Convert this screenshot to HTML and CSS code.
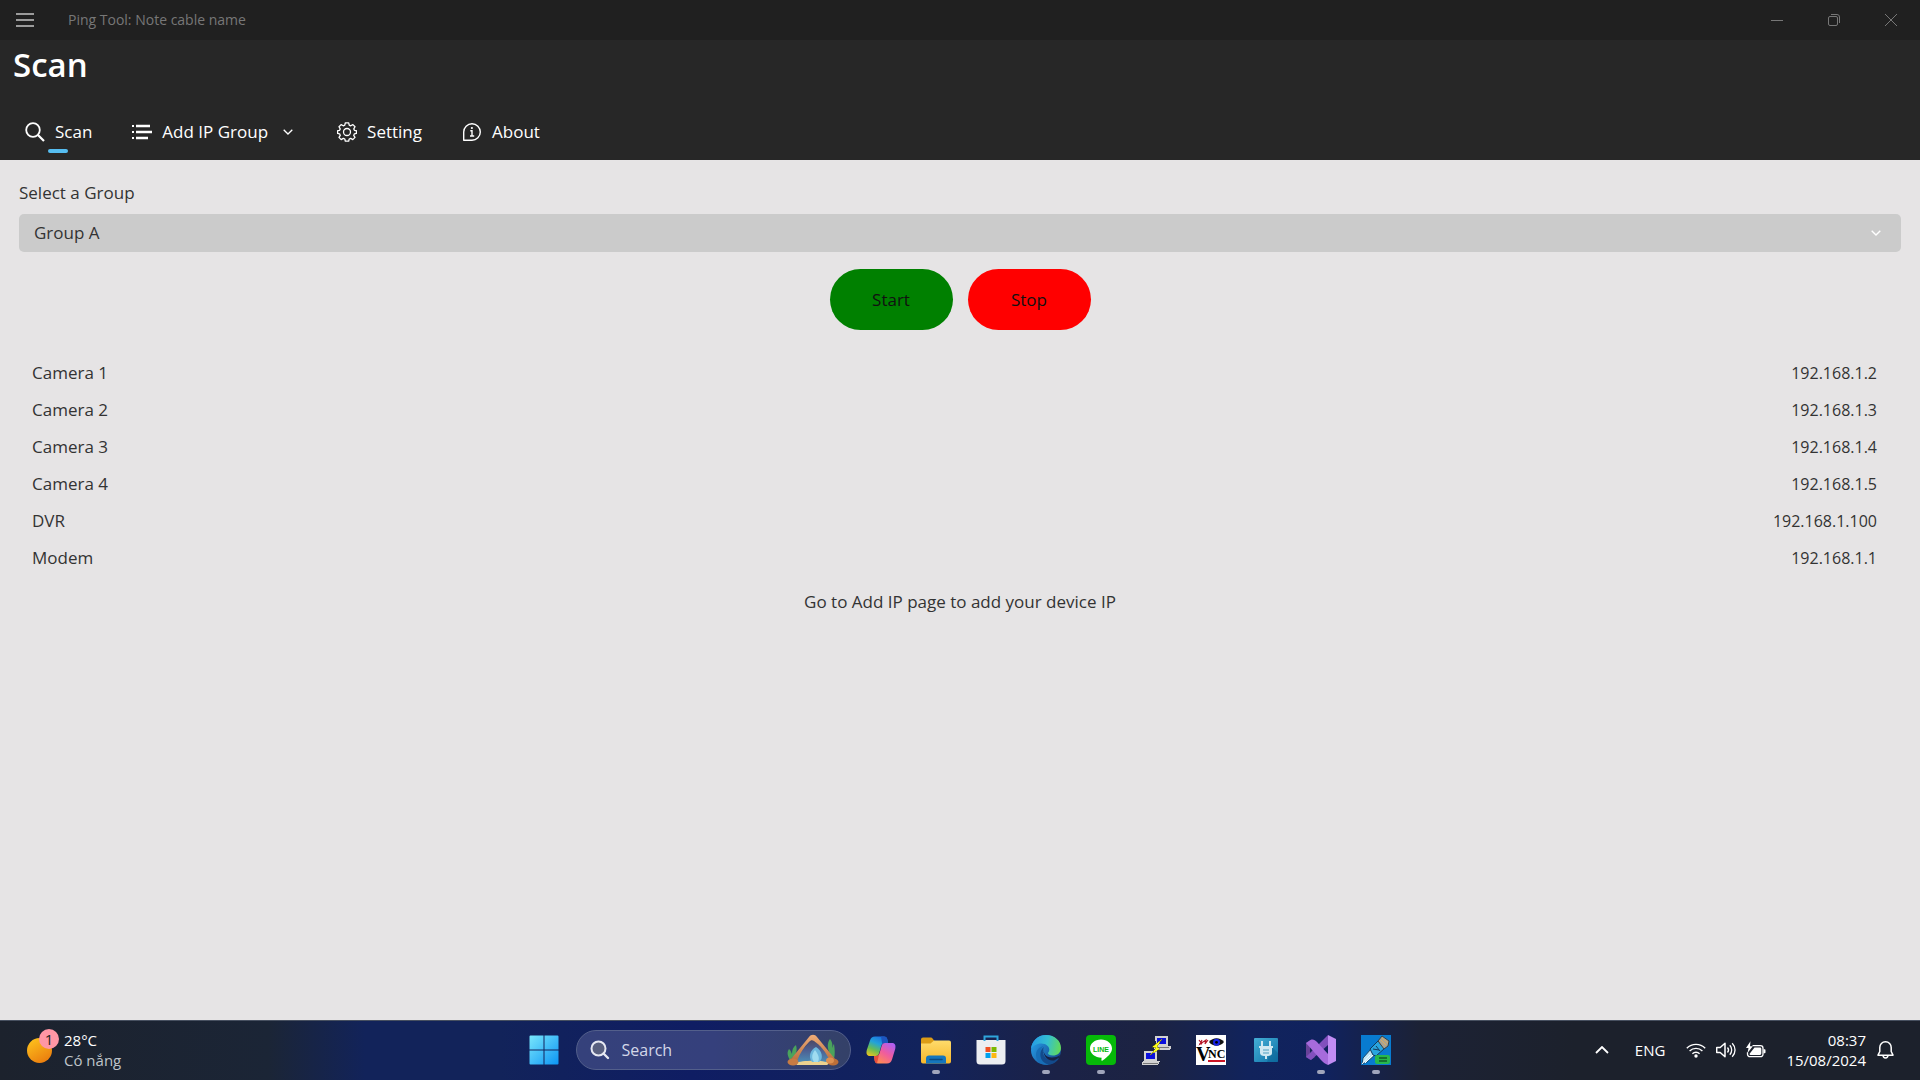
FILE: index.html
```html
<!DOCTYPE html>
<html lang="en">
  <head>
    <meta charset="UTF-8" />
    <meta name="viewport" content="width=device-width, initial-scale=1.0" />
    <title>Ping Tool: Note cable name</title>
    <link rel="stylesheet" href="styles.css">
  </head>
  <body>
    <!-- Window title bar -->
    <header class="title-bar">
      <button type="button" class="menu-button" aria-label="Menu">
        <svg width="20" height="14" viewBox="0 0 20 14"><path d="M1 1h18M1 7h18M1 13h18" stroke="#c4c4c4" stroke-width="1.4"/></svg>
      </button>
      <span class="window-title">Ping Tool: Note cable name</span>
      <div class="window-buttons">
        <button type="button" aria-label="Minimize">
          <svg width="14" height="14" viewBox="0 0 14 14"><path d="M1 7.5h12"/></svg>
        </button>
        <button type="button" aria-label="Restore">
          <svg width="14" height="14" viewBox="0 0 14 14"><rect x="1.5" y="3.5" width="9" height="9" rx="1.5"/><path d="M4 1.5h6a2.5 2.5 0 0 1 2.5 2.5v6"/></svg>
        </button>
        <button type="button" aria-label="Close">
          <svg width="14" height="14" viewBox="0 0 14 14"><path d="M1 1l12 12M13 1L1 13"/></svg>
        </button>
      </div>
    </header>

    <!-- Page heading and navigation -->
    <div class="page-header">
      <h1>Scan</h1>
      <nav class="tabs">
        <a href="#scan" class="tab active">
          <svg width="20" height="20" viewBox="0 0 20 20"><circle cx="8" cy="8" r="6.8" stroke-width="1.8"/><path d="M13 13l6 6" stroke-width="2.2"/></svg>
          <span>Scan</span>
        </a>
        <a href="#groups" class="tab">
          <svg width="20" height="20" viewBox="0 0 20 20"><path d="M4 4h14M4 10h16M4 16h12" stroke-width="2.4"/><path d="M0 4h2M0 10h2M0 16h2" stroke-width="2"/></svg>
          <span>Add IP Group</span>
          <svg class="tab-arrow" width="10" height="6" viewBox="0 0 10 6"><path d="M.7.7L5 5L9.300 .7" stroke-width="1.3"/></svg>
        </a>
        <a href="#setting" class="tab">
          <svg width="20" height="20" viewBox="0 0 20 20"><path d="M8.300 .8h3.400l.5 2.300 1.500.7 2.200-1.200 2.100 2.200-1.200 2.100.6 1.400 2 .4v2.700l-2 .4-.7 1.600 1.300 2-2.200 2.200-2.100-1.200-1.500.6-.5 2.200H8.300l-.5-2.200-1.500-.6-2.100 1.200L2 15.400l1.300-2-.7-1.600-2-.4V8.700l2-.4.6-1.400L2 4.800l2.100-2.200 2.200 1.200 1.500-.7z" stroke-width="1.3" stroke-linejoin="round"/><circle cx="10" cy="10" r="3.500" stroke-width="1.3"/></svg>
          <span>Setting</span>
        </a>
        <a href="#about" class="tab">
          <svg width="20" height="20" viewBox="0 0 20 20"><path d="M1.700 18.300V10a8.300 8.300 0 1 1 8.300 8.300z" stroke-width="1.400" stroke-linejoin="round"/><path d="M8.300 8.700H10v5M8 14h4.200" stroke-width="1.400"/><circle cx="9.900" cy="6" r=".5" stroke-width="1.200"/></svg>
          <span>About</span>
        </a>
      </nav>
    </div>

    <main class="content">
      <label for="group">Select a Group</label>
      <div class="select-box">
        <select id="group">
          <option>Group A</option>
        </select>
        <svg class="select-arrow" width="10" height="6" viewBox="0 0 10 6"><path d="M.7.7L5 5L9.300 .7"/></svg>
      </div>

      <div class="actions">
        <button type="button" class="start">Start</button>
        <button type="button" class="stop">Stop</button>
      </div>

      <table class="devices">
        <tbody>
          <tr><td>Camera 1</td><td>192.168.1.2</td></tr>
          <tr><td>Camera 2</td><td>192.168.1.3</td></tr>
          <tr><td>Camera 3</td><td>192.168.1.4</td></tr>
          <tr><td>Camera 4</td><td>192.168.1.5</td></tr>
          <tr><td>DVR</td><td>192.168.1.100</td></tr>
          <tr><td>Modem</td><td>192.168.1.1</td></tr>
        </tbody>
      </table>

      <p class="hint">Go to Add IP page to add your device IP</p>
    </main>

    <!-- Taskbar -->
    <footer class="taskbar">
      <button type="button" class="weather">
        <span class="sun"><span class="badge">1</span></span>
        <span class="weather-text">
          <span>28°C</span>
          <span class="muted">Có nắng</span>
        </span>
      </button>

      <div class="apps">
        <button type="button" class="app" aria-label="Start menu">
          <svg width="30" height="30" viewBox="0 0 30 30">
            <defs><linearGradient id="win" x1="0" y1="0" x2="30" y2="30" gradientUnits="userSpaceOnUse"><stop stop-color="#7be8fb"/><stop offset="1" stop-color="#0a93f5"/></linearGradient></defs>
            <path fill="url(#win)" d="M1.500 .5H14.500v14H.5v-13a1 1 0 0 1 1-1zM15.500 .5h13a1 1 0 0 1 1 1v13h-14zM.5 15.500H14.500v14H1.500a1 1 0 0 1-1-1zM15.500 15.500h14v13a1 1 0 0 1-1 1h-13z"/>
          </svg>
        </button>

        <label class="search">
          <svg width="20" height="20" viewBox="0 0 20 20"><circle cx="8.500" cy="8.500" r="7" fill="#596080" stroke="#e6e8f2" stroke-width="2"/><path d="M13.500 13.500l4.500 4.500" stroke="#e6e8f2" stroke-width="2.400" stroke-linecap="round"/></svg>
          <input type="text" placeholder="Search" aria-label="Search" />
          <svg width="52" height="32" viewBox="0 0 52 32">
            <defs>
              <linearGradient id="cave" x1="26" y1="5" x2="26" y2="28" gradientUnits="userSpaceOnUse"><stop stop-color="#4b4560"/><stop offset=".5" stop-color="#4d5f92"/><stop offset="1" stop-color="#4c8cb5"/></linearGradient>
              <linearGradient id="rock" x1="0" y1="0" x2="0" y2="1"><stop stop-color="#f0ad78"/><stop offset="1" stop-color="#b86f3e"/></linearGradient>
            </defs>
            <path d="M3 26c-3-5-3-8-1-11 2 2 2 3 3 5 0-4 1-7 4-9 1 4 1 7-1 10zM43 20c-3-6-3-11 0-15 2 3 3 5 2 9 1-2 1-3 2-4 1 6 1 11 0 15z" fill="#4aa35c"/>
            <path d="M6 27L26 4l20 23-3 3H9z" fill="url(#cave)"/>
            <path d="M8 29c8-3 28-3 35 0l-3 2H10z" fill="#ecd28f"/>
            <path d="M4 25L22 3c2-3 6-3 8 0l18 22-5 2C39 18 33 11 27 7c-2-1-3-1-5 1-5 5-9 11-12 19z" fill="url(#rock)"/>
            <path d="M29 13c6 3 8 12 3 15h-7c-4-5-2-12 4-15z" fill="#6db8de"/>
            <path d="M28 16c-3 4-4 8-1 12h4c2-4 0-8-3-12z" fill="#9fdcf0"/>
            <ellipse cx="6" cy="28" rx="5.500" ry="3.500" fill="#c77b43"/>
            <ellipse cx="46" cy="28" rx="5.500" ry="3.500" fill="#bd6f38"/>
            <ellipse cx="43" cy="26.500" rx="4" ry="3" fill="#dd9050"/>
          </svg>
        </label>

        <button type="button" class="app" aria-label="Copilot">
          <svg width="30" height="30" viewBox="0 0 30 30">
            <defs>
              <linearGradient id="copA" x1="14" y1="1" x2="5" y2="22" gradientUnits="userSpaceOnUse"><stop stop-color="#1b6fe0"/><stop offset=".35" stop-color="#22a3d9"/><stop offset=".65" stop-color="#66bd55"/><stop offset="1" stop-color="#f1c51c"/></linearGradient>
              <linearGradient id="copB" x1="26" y1="9" x2="14" y2="28" gradientUnits="userSpaceOnUse"><stop stop-color="#b05ff0"/><stop offset=".5" stop-color="#ef5c9f"/><stop offset="1" stop-color="#ff8a55"/></linearGradient>
            </defs>
            <path d="M9 1.500h9c2 0 2.800 1 3.300 2.800L22 8h-3.500c-2 0-2.700 1-3.300 3l-2 7c-.6 2-1.600 3-3.600 3H4C.8 21 0 18.500 .8 15L4 5.500c.8-2.600 2.400-4 5-4z" fill="url(#copA)"/>
            <path d="M15 1.500h3c2 0 2.800 1 3.300 2.800L22 8h-3.500c-1 0-1.800.3-2.300.9z" fill="#1d55bf"/>
            <path d="M21 28.500h-9c-2 0-2.800-1-3.300-2.800L8 21h2c2 0 3-1 3.600-3l2-7c.6-2 1.400-3 3.400-3h7c3.200 0 4 2.500 3.200 6L26 24.500c-.8 2.600-2.400 4-5 4z" fill="url(#copB)"/>
            <path d="M8 21h2c1.600 0 2.500-.6 3.100-1.800L11 28.400c-1.300-.3-2-1.300-2.300-2.700z" fill="#e84e3c"/>
          </svg>
        </button>

        <button type="button" class="app running" aria-label="File Explorer">
          <svg width="30" height="30" viewBox="0 0 30 30">
            <defs><linearGradient id="folder" x1="0" y1="5" x2="0" y2="28" gradientUnits="userSpaceOnUse"><stop stop-color="#ffdc6d"/><stop offset="1" stop-color="#f7b82b"/></linearGradient></defs>
            <path d="M0 4.500a2 2 0 0 1 2-2h7.500c1 0 1.500.3 2 1l2 2.500v5H0z" fill="#dc9c16"/>
            <path d="M0 8.500h9.500L13 5.500h15a2 2 0 0 1 2 2v19a2 2 0 0 1-2 2H2a2 2 0 0 1-2-2z" fill="url(#folder)"/>
            <path d="M5 28.500v-5a3 3 0 0 1 3-3h14a3 3 0 0 1 3 3v5z" fill="#1576bd"/>
            <path d="M9 24.500h12" stroke="#0b4b83" stroke-width="1.500" stroke-linecap="round"/>
          </svg>
        </button>

        <button type="button" class="app" aria-label="Microsoft Store">
          <svg width="30" height="30" viewBox="0 0 30 30">
            <path d="M.5 5h29v21a3.500 3.500 0 0 1-3.500 3.500H4A3.500 3.500 0 0 1 .5 26z" fill="#eceef1"/>
            <path d="M8.500 6V1.500h13V6" fill="none" stroke="#2fa5dc" stroke-width="2"/>
            <path d="M9.500 12h5v5h-5z" fill="#f05022"/><path d="M15.500 12h5v5h-5z" fill="#7cb900"/><path d="M9.500 18h5v5h-5z" fill="#00a2ed"/><path d="M15.500 18h5v5h-5z" fill="#fdb813"/>
          </svg>
        </button>

        <button type="button" class="app running" aria-label="Edge">
          <svg width="30" height="30" viewBox="0 0 30 30">
            <defs>
              <linearGradient id="edgeTop" x1="2" y1="8" x2="29" y2="14" gradientUnits="userSpaceOnUse"><stop stop-color="#279fe4"/><stop offset=".5" stop-color="#34bfd0"/><stop offset="1" stop-color="#61d95c"/></linearGradient>
              <linearGradient id="edgeLow" x1="0" y1="14" x2="22" y2="28" gradientUnits="userSpaceOnUse"><stop stop-color="#2493dc"/><stop offset="1" stop-color="#174f96"/></linearGradient>
            </defs>
            <circle cx="15" cy="15" r="15" fill="url(#edgeLow)"/>
            <path d="M0 14C.7 6 7 0 15 0c9 0 15 6 15 13 0 5-4 7.500-8 7.500-3.500 0-5-1.200-5-2.300 0-.8 1.300-1.400 1.300-3.700 0-3-3.300-6-8-6C5.500 8.500 1.500 11 0 14z" fill="url(#edgeTop)"/>
            <path d="M12.500 11C8 14 8 27 18 29.500 10 31 5 26 5 20c0-5 3-8 7.500-9z" fill="#176eb7"/>
            <path d="M13 12c-3 5 0 13 8 13 3 0 5-.7 7-2-2 4-6.300 6.500-10 6.500C7 27 8 15 13 12z" fill="#134a8b"/>
            <path d="M13 12.500c-1.500 5.500 1.500 10 8 10 3.300 0 5.500-.7 8-2.500l-.8 2.500-4.500 2.700C17 27 10.500 20 13 12.500z" fill="#182145"/>
          </svg>
        </button>

        <button type="button" class="app running" aria-label="LINE">
          <svg width="30" height="30" viewBox="0 0 30 30">
            <rect width="30" height="30" rx="4" fill="#06b909"/>
            <path d="M15 4.500c6.300 0 11 4 11 9 0 4.500-4.500 8.500-9.500 12-.7.500-1.200.2-1.100-.7l.2-2C9 22.500 4 18.500 4 13.500c0-5 4.700-9 11-9z" fill="#fff"/>
            <text x="15" y="16.500" text-anchor="middle" class="line-text" fill="#06b909">LINE</text>
          </svg>
        </button>

        <button type="button" class="app" aria-label="PuTTY">
          <svg width="30" height="30" viewBox="0 0 30 30" shape-rendering="crispEdges">
            <path d="M14 1h13v10h3v3l-2 1H14l-1-2 2-2z" fill="#d2d2d2"/><path d="M16 3h9v6h-9z" fill="#0b10dc"/><path d="M15 12h13" stroke="#777" stroke-width="1"/>
            <path d="M3 16h13v10h3l-2 4H1v-3l2-2z" fill="#d2d2d2"/><path d="M5 18h9v6H5z" fill="#0b10dc"/><path d="M2 28h15" stroke="#777" stroke-width="1"/>
            <path d="M21 4l-10 8 4 1-6 7 10-6-3-2z" fill="#ffff1b" stroke="#77760c" stroke-width=".5"/>
          </svg>
        </button>

        <button type="button" class="app" aria-label="VNC Viewer">
          <svg width="30" height="30" viewBox="0 0 30 30">
            <rect width="30" height="30" fill="#fff"/>
            <path d="M3 5l3 4M6 5L4 9l6-4-1 4 3-4M3 9h3" stroke="#b5182a" stroke-width="1.200" fill="none"/>
            <path d="M13 7c4-5 11-5 15 0-4 5-11 5-15 0z" fill="#111"/><circle cx="20.500" cy="7.300" r="3.500" fill="#1623e6"/><circle cx="20.500" cy="7.300" r="1.400" fill="#000"/>
            <text x="0" y="26" class="vnc-big">V</text><text x="12" y="23" class="vnc-small">NC</text>
            <path d="M12 26h17" stroke="#cb1525" stroke-width="2"/>
          </svg>
        </button>

        <button type="button" class="app" aria-label="Plug">
          <svg width="24" height="24" viewBox="0 0 24 24">
            <defs><linearGradient id="plug" x1="0" y1="0" x2="24" y2="24" gradientUnits="userSpaceOnUse"><stop stop-color="#45afd6"/><stop offset="1" stop-color="#0e72a8"/></linearGradient></defs>
            <rect width="24" height="24" rx="1" fill="url(#plug)"/>
            <path d="M18 9l6 6v9H13z" fill="#0b6293" opacity=".5"/>
            <path d="M7 3h2v5H7zM15 3h2v5h-2zM5 8h14v2h-1v5c0 2-2 3-4 3h-1v3h-2v-3h-1c-2 0-4-1-4-3v-5H5z" fill="#cfe8f2"/>
            <path d="M9 12h6M9 15h6" stroke="#4e9fc0"/>
          </svg>
        </button>

        <button type="button" class="app running" aria-label="Visual Studio">
          <svg width="30" height="30" viewBox="0 0 30 30">
            <path d="M0 8l4.500-3 4 2.500v15L4.500 25 0 22z" fill="#684299"/>
            <path d="M4 9l6 6-6 6z" fill="#182457"/>
            <path d="M22 0l8 4v22l-8 4z" fill="#c18cf3"/>
            <path d="M22 0v10L5 25 0 22z" fill="#8150bd"/>
            <path d="M4.500 5C7 4 9 5 11 7l11 12v11C19 29 17 27 15 25L0 8z" fill="#a66bdc"/>
          </svg>
        </button>

        <button type="button" class="app running" aria-label="Ping Tool">
          <svg width="30" height="30" viewBox="0 0 30 30">
            <rect width="30" height="30" fill="#087bd0"/>
            <path d="M1 29l1-6 8-9 5 5-9 8z" fill="#bfe4f4" stroke="#17496d"/>
            <path d="M1 29l8-9M4 28l8-8" stroke="#f2fbff"/>
            <path d="M9 14l8-8 7 7-9 8-3-1z" fill="#29a5df" stroke="#12395c"/>
            <path d="M12 14l6 1M15 11l4 5" stroke="#12395c"/>
            <path d="M17 6l4-5 7 5-1 5-4 3z" fill="#a9a391" stroke="#384044"/>
            <path d="M21 3l6 5M20 5l5 5" stroke="#d9ad62"/>
            <rect x="14" y="20" width="15" height="9" rx="2" fill="#27b84e"/>
            <path d="M18 23h8M18 26h8" stroke="#105d28" stroke-width="1.300"/>
          </svg>
        </button>
      </div>

      <div class="tray">
        <button type="button" class="tray-more" aria-label="Show hidden icons">
          <svg width="14" height="8" viewBox="0 0 14 8"><path d="M1 7l6-6 6 6" stroke-width="1.800"/></svg>
        </button>
        <button type="button" class="language">ENG</button>
        <button type="button" class="status" aria-label="Network, sound and battery">
          <svg width="20" height="16" viewBox="0 0 20 16"><path d="M.8 6.200a13 13 0 0 1 18.400 0M3.600 9a9 9 0 0 1 12.800 0M6.400 11.800a5.100 5.100 0 0 1 7.200 0" stroke-width="1.400"/><circle cx="10" cy="14" r="1.700" fill="#fff" stroke="none"/></svg>
          <svg width="20" height="16" viewBox="0 0 20 16"><path d="M.7 5.500h3.500L9 1.200v13.600L4.200 10.500H.7z" stroke-linejoin="round"/><path d="M11.500 5.500c1.300 1.500 1.300 3.500 0 5M13.800 3.300c2.500 2.700 2.500 6.700 0 9.400M16.200 1.200c3.800 4 3.800 9.600 0 13.600" stroke-width="1.300"/></svg>
          <svg width="20" height="18" viewBox="0 0 20 18"><path d="M6.500 4.700h8a2.500 2.500 0 0 1 2.500 2.500v6a2.500 2.500 0 0 1-2.500 2.500H4a2.500 2.500 0 0 1-2.500-2.500v-2" stroke-width="1.300"/><path d="M8.500 6.500h5.500a1.300 1.300 0 0 1 1.300 1.300v4.800a1.300 1.300 0 0 1-1.300 1.300H4.500c-1 0-1.200-.8-.7-1.300zM17.500 8.300h1c.6 0 1 .4 1 1v1.900c0 .6-.4 1-1 1h-1zM4.500.3L0 7h2.500L1.500 12 6.800 5.300H4z" fill="#fff" stroke="none"/></svg>
        </button>
        <button type="button" class="clock">
          <span>08:37</span>
          <span>15/08/2024</span>
        </button>
        <button type="button" class="bell" aria-label="Notifications">
          <svg width="17" height="18" viewBox="0 0 17 18"><path d="M8.500 .8c3.400 0 5.700 2.600 5.700 5.700v4l1.800 3.700H1l1.800-3.700v-4c0-3.100 2.300-5.700 5.700-5.700zM6 14.500c.3 3.200 4.700 3.200 5 0" stroke-linejoin="round"/></svg>
        </button>
      </div>
    </footer>
  </body>
</html>
```

FILE: styles.css
```css
* {
  box-sizing: border-box;
}
body {
  display: flex;
  flex-direction: column;
  min-height: 100vh;
  margin: 0;
  font-family: "Open Sans", "Noto Sans", sans-serif;
  font-size: 17px;
  line-height: 24px;
  color: #333;
  background-color: #e6e4e5;
}
button,
input,
select {
  font: inherit;
  color: inherit;
  background: none;
  border: none;
  padding: 0;
}
svg {
  display: block;
  flex: none;
}

/* Title bar */
.title-bar {
  display: flex;
  align-items: center;
  height: 40px;
  background-color: #202020;
}
.menu-button {
  display: flex;
  padding: 13px 15px;
}
.window-title {
  margin-left: 18px;
  font-size: 14px;
  color: #777;
}
.window-buttons {
  display: flex;
  margin-left: auto;
  padding-right: 1px;
}
.window-buttons button {
  display: flex;
  justify-content: center;
  align-items: center;
  width: 57px;
  height: 38px;
}
.window-buttons svg {
  fill: none;
  stroke: #777;
}

/* Heading and tabs */
.page-header {
  color: #fff;
  background-color: #272727;
}
h1 {
  margin: 0;
  padding: 2px 13px 22px;
  font-size: 33px;
  line-height: 46px;
  font-weight: 600;
}
.tabs {
  display: flex;
  padding-left: 5px;
}
.tab {
  position: relative;
  display: flex;
  align-items: center;
  gap: 10px;
  height: 50px;
  padding: 0 20px 6px;
  color: #fff;
  text-decoration: none;
}
.tab svg {
  fill: none;
  stroke: #fff;
}
.tab .tab-arrow {
  margin: 0 4px 0 5px;
}
.tab.active::after {
  content: "";
  position: absolute;
  left: 50%;
  bottom: 7px;
  width: 20px;
  height: 4px;
  margin-left: -11px;
  border-radius: 2px;
  background-color: #56bdf0;
}

/* Main content */
.content {
  flex: 1;
  padding: 21px 19px;
}
.content label {
  display: block;
}
.select-box {
  position: relative;
  margin-top: 9px;
}
.select-box select {
  display: block;
  width: 100%;
  height: 38px;
  padding: 0 15px;
  border-radius: 5px;
  background-color: #cbcbcb;
  appearance: none;
}
.select-arrow {
  position: absolute;
  right: 20px;
  top: 16px;
  fill: none;
  stroke: #fff;
  stroke-width: 1.4;
  pointer-events: none;
}
.actions {
  display: flex;
  justify-content: center;
  gap: 15px;
  margin-top: 17px;
}
.actions button {
  width: 123px;
  height: 61px;
  border-radius: 31px;
  color: #111;
}
.actions .start {
  background-color: #008000;
}
.actions .stop {
  background-color: #ff0000;
}
.devices {
  width: 100%;
  margin-top: 24px;
  border-collapse: collapse;
}
.devices td {
  height: 37px;
  padding: 0 24px 0 13px;
}
.devices td:last-child {
  font-size: 16px;
  text-align: right;
}
.hint {
  margin: 14px 0 0;
  text-align: center;
}

/* Taskbar */
.taskbar {
  display: grid;
  grid-template-columns: 1fr auto 1fr;
  align-items: center;
  height: 60px;
  padding-bottom: 1px;
  border-top: 1px solid #475060;
  font-size: 15px;
  line-height: 20px;
  color: #fff;
  background: linear-gradient(90deg, #1c222d 0%, #1b2536 14%, #12235a 19%, #12235a 26%, #0f1d63 36%, #12235c 48%, #1b2247 55%, #1c2342 60%, #11235c 65%, #10225e 69%, #1c2235 74%, #1c212c 82%);
}
.weather {
  display: flex;
  align-items: center;
  gap: 12px;
  padding-left: 27px;
  text-align: left;
}
.sun {
  position: relative;
  width: 25px;
  height: 25px;
  border-radius: 50%;
  background: linear-gradient(150deg, #ffc81e, #e8730c);
}
.badge {
  position: absolute;
  left: 12px;
  top: -9px;
  width: 20px;
  height: 20px;
  border-radius: 50%;
  text-align: center;
  color: #222;
  background-color: #ff96a5;
}
.weather-text,
.clock {
  display: flex;
  flex-direction: column;
}
.muted {
  color: #bfc3ca;
}
.apps {
  display: flex;
  align-items: center;
}
.app {
  position: relative;
  display: flex;
  justify-content: center;
  align-items: center;
  width: 55px;
  height: 58px;
}
.app.running::after {
  content: "";
  position: absolute;
  left: 50%;
  bottom: 5px;
  width: 8px;
  height: 4px;
  margin-left: -4px;
  border-radius: 2px;
  background-color: #a0a5bb;
}
.line-text {
  font: bold 7px "Liberation Sans", sans-serif;
}
.vnc-big {
  font: bold 20px "Liberation Serif", serif;
}
.vnc-small {
  font: bold 12px "Liberation Serif", serif;
}
.search {
  display: flex;
  align-items: center;
  width: 275px;
  height: 40px;
  margin: 0 3px 0 4px;
  padding: 0 11px 0 13px;
  border: 1px solid #535f8b;
  border-radius: 20px;
  background: linear-gradient(90deg, #35417b, #35407c 50%, #344168);
}
.search input {
  flex: 1;
  min-width: 0;
  margin-left: 12px;
  font-size: 16px;
}
.search input::placeholder {
  color: #d3d7e8;
  opacity: 1;
}
.tray {
  display: flex;
  justify-content: flex-end;
  align-items: center;
  padding-right: 26px;
}
.tray svg {
  fill: none;
  stroke: #fff;
  stroke-width: 1.5;
}
.language {
  margin-left: 26px;
}
.status {
  display: flex;
  align-items: center;
  gap: 10px;
  margin-left: 21px;
}
.clock {
  margin-left: 20px;
  text-align: right;
}
.bell {
  margin-left: 11px;
}
```
